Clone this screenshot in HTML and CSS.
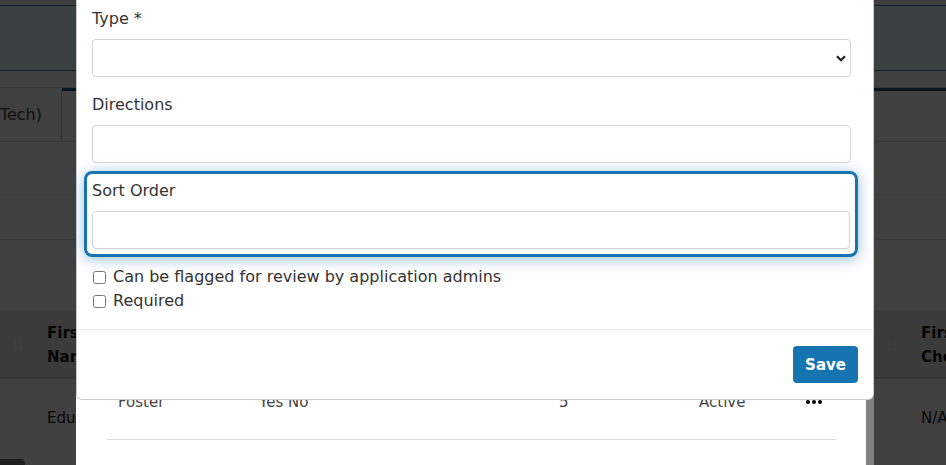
FILE: index.html
```html
<!DOCTYPE html>
<html lang="en">

<head>
    <meta charset="UTF-8">
    <meta name="viewport" content="width=device-width, initial-scale=1.0">
    <title>Edit Question</title>
    <link rel="stylesheet" href="styles.css">
</head>

<body>
    <!-- applicant list page, sits behind the dialog -->
    <div class="page">
        <div class="topbar"></div>
        <div class="banner"></div>
        <div class="subbar"></div>

        <div class="tabs">
            <div class="tab">Education (Tech)</div>
            <div class="tab active"></div>
        </div>

        <div class="filter-row"></div>
        <div class="filter-row short"></div>
        <div class="gap"></div>

        <div class="grid-head">
            <div class="sort-cell">
                <svg width="12" height="14" viewBox="0 0 12 14"><path d="M3 13V1.5M0.8 3.8 3 1.5 5.2 3.8M9 1v11.5M6.8 10.2 9 12.5 11.2 10.2" fill="none" stroke="currentColor" stroke-width="1"/></svg>
            </div>
            <div class="head-cell">First<br>Name</div>
            <div class="sort-cell">
                <svg width="12" height="14" viewBox="0 0 12 14"><path d="M3 13V1.5M0.8 3.8 3 1.5 5.2 3.8M9 1v11.5M6.8 10.2 9 12.5 11.2 10.2" fill="none" stroke="currentColor" stroke-width="1"/></svg>
            </div>
            <div class="head-cell narrow">First<br>Choice</div>
        </div>

        <div class="grid-row">
            <div class="sort-cell"></div>
            <div class="body-cell">Education</div>
            <div class="sort-cell"></div>
            <div class="body-cell narrow">N/A</div>
        </div>

        <div class="chat-tab"></div>
    </div>

    <div class="backdrop"></div>

    <!-- list panel that the dialog was opened from -->
    <div class="sheet">
        <div class="list-row">
            <div>Foster</div>
            <div>Yes No</div>
            <div>5</div>
            <div>Active</div>
            <div class="more">
                <svg width="16" height="4" viewBox="0 0 16 4"><circle cx="2" cy="2" r="2"/><circle cx="8" cy="2" r="2"/><circle cx="14" cy="2" r="2"/></svg>
            </div>
        </div>
    </div>

    <!-- question settings dialog -->
    <div class="modal">
        <form class="modal-body">
            <div class="field">
                <label class="field-label" for="type">Type *</label>
                <div class="select-wrap">
                    <select id="type" class="control"></select>
                    <svg class="chevron" width="10" height="7" viewBox="0 0 10 7"><path d="M1 1.2 5 5.2 9 1.2" fill="none" stroke="#222" stroke-width="2.2"/></svg>
                </div>
            </div>

            <div class="field">
                <label class="field-label" for="directions">Directions</label>
                <input id="directions" class="control" type="text">
            </div>

            <div class="field focused">
                <label class="field-label" for="sort">Sort Order</label>
                <input id="sort" class="control" type="text">
            </div>

            <label class="check"><input type="checkbox"> Can be flagged for review by application admins</label>
            <label class="check"><input type="checkbox"> Required</label>
        </form>

        <div class="modal-footer">
            <button class="save" type="button">Save</button>
        </div>
    </div>
</body>

</html>
```
FILE: styles.css
```css
html,
body {
    margin: 0;
    height: 100%;
}

body {
    position: relative;
    overflow: hidden;
    background-color: #fff;
    font-family: "DejaVu Sans", sans-serif;
    color: #333;
}

/* page behind the dialog */
.page {
    height: 100%;
}

.topbar {
    height: 5px;
    background-color: #f4f4f4;
    border-bottom: 1px solid #3682c0;
}

.banner {
    height: 64px;
    background-color: #e8fbff;
    border-bottom: 1px solid #3682c0;
}

.subbar {
    height: 16px;
    border-bottom: 1px solid #e4e4e4;
}

.tabs {
    display: flex;
    height: 53px;
    border-bottom: 1px solid #e0e0e0;
}

.tab {
    display: flex;
    align-items: center;
    justify-content: flex-end;
    width: 62px;
    padding-right: 19px;
    box-sizing: border-box;
    overflow: hidden;
    white-space: nowrap;
    font-size: 16px;
    color: #444;
    border-right: 1px solid #d0d0d0;
}

.tab.active {
    flex: 1;
    border-right: none;
    border-top: 3px solid #0e4f80;
}

.filter-row {
    height: 52px;
    border-bottom: 1px solid #e4e4e4;
}

.filter-row.short {
    height: 44px;
}

.gap {
    height: 71px;
}

.grid-head,
.grid-row {
    display: flex;
}

.grid-head {
    background-color: #ececec;
    border-top: 1px solid #e0e0e0;
    border-bottom: 2px solid #d8d8d8;
    padding: 9px 0 8px;
    font-size: 15px;
    font-weight: bold;
    line-height: 24px;
    color: #111;
}

.sort-cell {
    display: flex;
    align-items: center;
    justify-content: flex-end;
    width: 36px;
    padding-right: 12px;
    box-sizing: border-box;
    color: #fff;
}

.head-cell,
.body-cell {
    flex: 1;
    padding-left: 11px;
    box-sizing: border-box;
    white-space: nowrap;
    overflow: hidden;
}

.head-cell.narrow,
.body-cell.narrow {
    flex: none;
    width: 36px;
}

.grid-row {
    padding-top: 27px;
    font-size: 15px;
    line-height: 24px;
    color: #222;
}

.chat-tab {
    position: absolute;
    left: 0;
    bottom: 0;
    width: 25px;
    height: 6px;
    background-color: #7c7c7c;
    border-top-right-radius: 4px;
}

.backdrop {
    position: absolute;
    inset: 0;
    background-color: rgba(0, 0, 0, 0.75);
}

/* list panel under the dialog */
.sheet {
    position: absolute;
    top: 0;
    bottom: 0;
    left: 76px;
    width: 790px;
    display: flex;
    flex-direction: column;
    justify-content: flex-end;
    background-color: #fff;
    border-right: 8px solid #808080;
}

.list-row {
    display: grid;
    grid-template-columns: 141px 300px 140px 107px 41px;
    align-items: center;
    height: 75px;
    margin: 0 30px 25px 31px;
    border-bottom: 1px solid #dcdcdc;
    font-size: 15px;
    color: #444;
}

.list-row > div {
    padding-left: 11px;
}

.more {
    display: flex;
    color: #333;
}

/* dialog */
.modal {
    position: absolute;
    top: 0;
    left: 76px;
    width: 798px;
    box-sizing: border-box;
    background-color: #fff;
    border: 1px solid rgba(0, 0, 0, 0.2);
    border-top: none;
    border-radius: 0 0 6px 6px;
}

.modal-body {
    padding: 7px 22px 16px 15px;
    margin: 0;
}

.field {
    margin-bottom: 16px;
}

.field-label {
    display: block;
    margin-bottom: 8px;
    font-size: 16px;
    line-height: 24px;
}

.control {
    display: block;
    width: 100%;
    height: 38px;
    box-sizing: border-box;
    padding: 6px 12px;
    font-family: inherit;
    font-size: 16px;
    color: #333;
    background-color: #fff;
    border: 1px solid #ced4da;
    border-radius: 4px;
    outline: none;
}

.select-wrap {
    position: relative;
}

select.control {
    appearance: none;
}

.chevron {
    position: absolute;
    right: 5px;
    top: 16px;
}

/* field that has the keyboard */
.field.focused {
    margin: -8px -7px 8px -8px;
    padding: 5px;
    border: 3px solid #1674b1;
    border-radius: 8px;
    box-shadow: 0 2px 14px rgba(22, 116, 177, 0.45);
}

.check {
    display: flex;
    align-items: center;
    font-size: 16px;
    line-height: 24px;
}

.check input {
    width: 13px;
    height: 13px;
    margin: 0 7px 0 1px;
}

.modal-footer {
    display: flex;
    justify-content: flex-end;
    padding: 16px 15px;
    border-top: 1px solid #e6e6e6;
}

.save {
    height: 37px;
    padding: 0 12px;
    font-family: inherit;
    font-size: 15px;
    font-weight: bold;
    color: #fff;
    background-color: #1674b1;
    border: none;
    border-radius: 4px;
}
```
